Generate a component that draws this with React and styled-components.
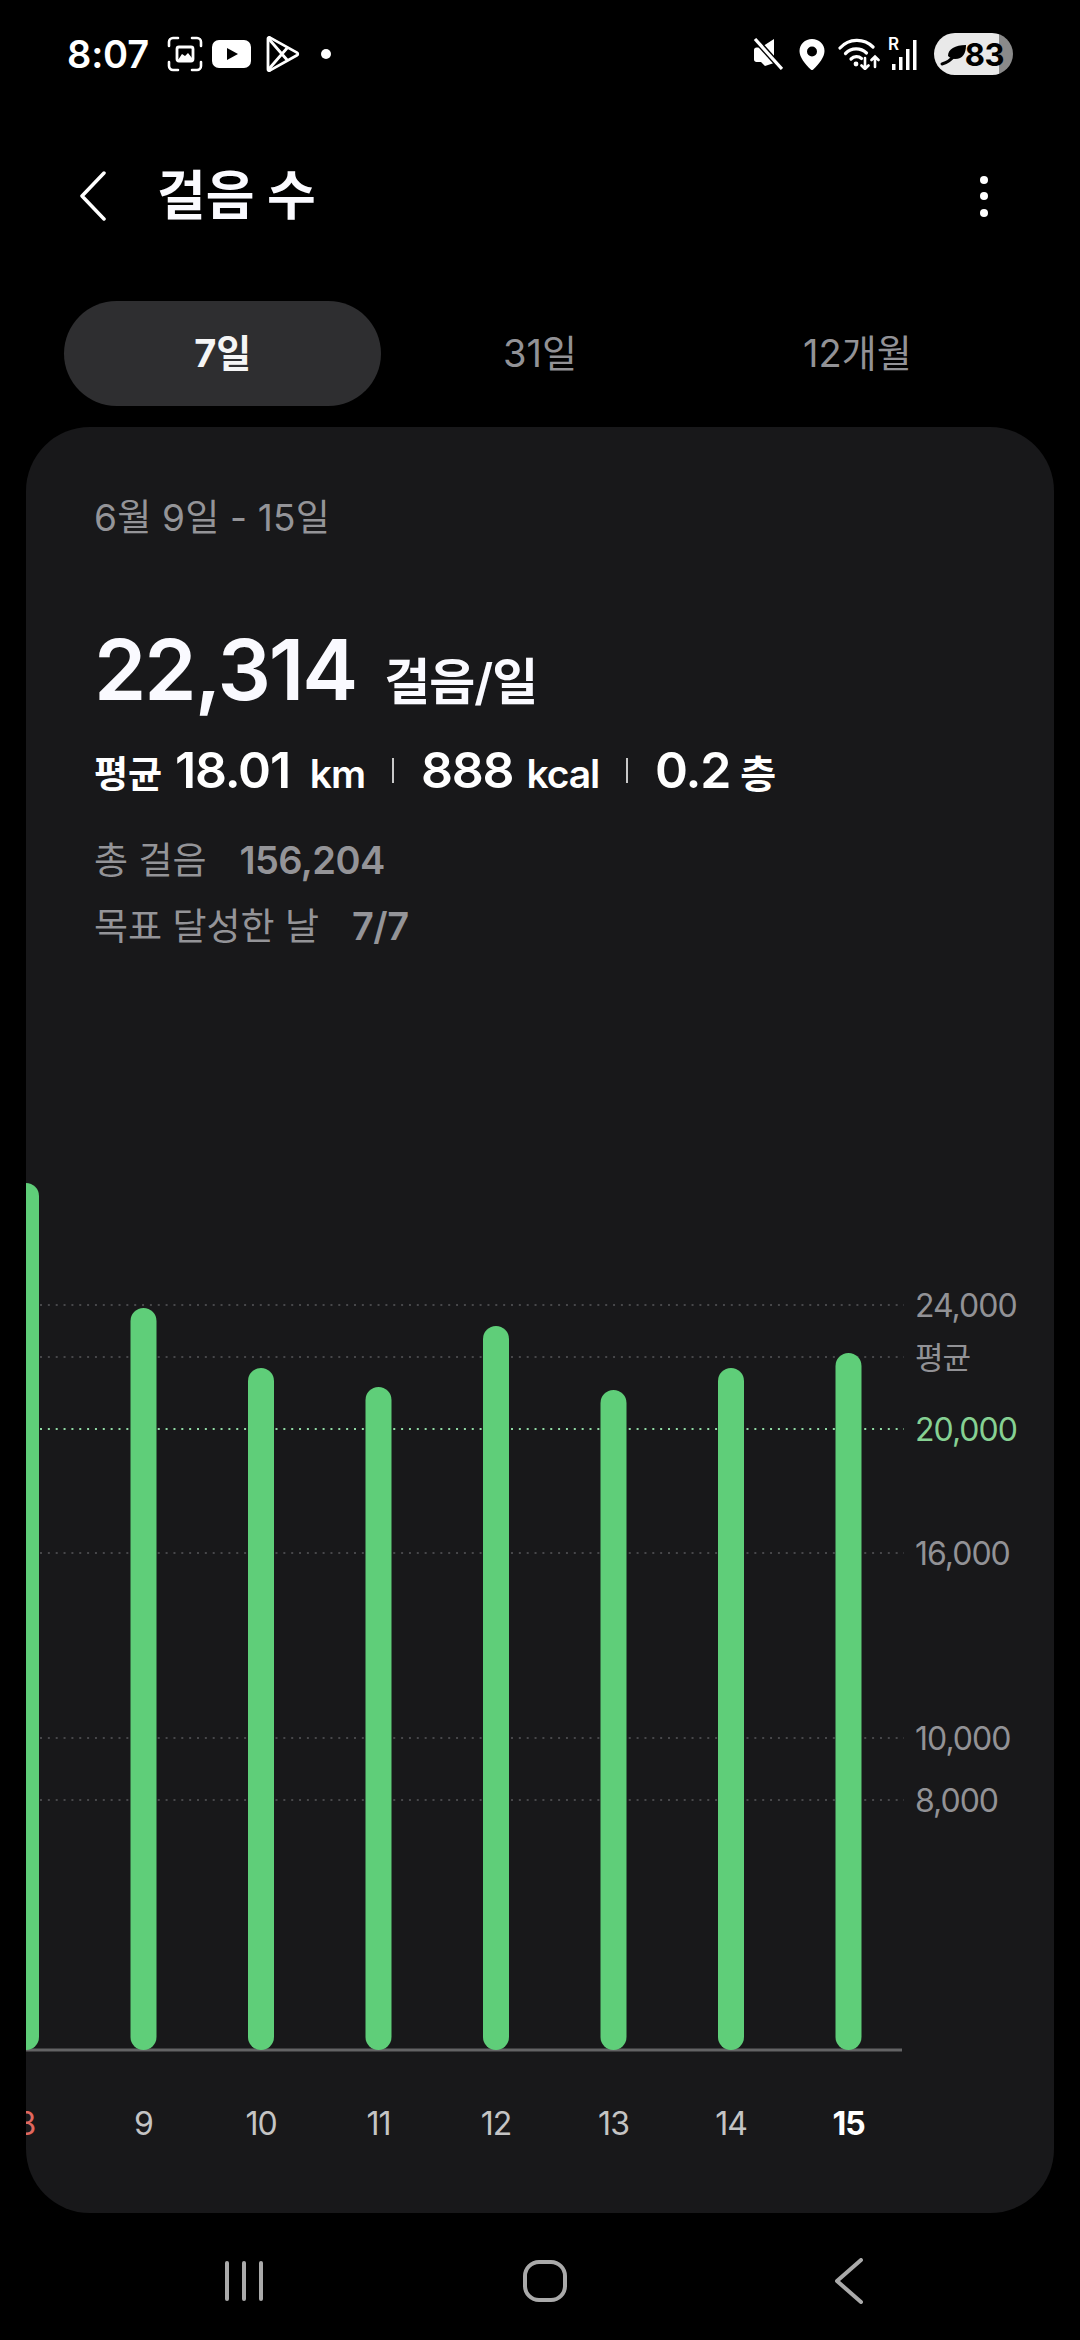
import React from 'react';
import styled, { createGlobalStyle } from 'styled-components';

const FONT = `Inter, "Noto Sans CJK KR", sans-serif`;

const GlobalStyle = createGlobalStyle`
  html, body {
    margin: 0;
    padding: 0;
    background: #000;
  }
  body {
    font-family: ${FONT};
  }
`;

const Screen = styled.div`
  width: 1080px;
  height: 2340px;
  background: #000;
  color: #fff;
  display: flex;
  flex-direction: column;
  overflow: hidden;
`;

const StatusBar = styled.div`
  height: 108px;
  flex: none;
  box-sizing: border-box;
  padding: 0 67px 0 67px;
  display: flex;
  align-items: center;
  justify-content: space-between;
`;

const StatusGroup = styled.div`
  display: flex;
  align-items: center;
`;

const Clock = styled.span`
  font-size: 38px;
  font-weight: 600;
  letter-spacing: -0.2px;
  width: 100px;
`;

const TitleBar = styled.div`
  height: 176px;
  flex: none;
  box-sizing: border-box;
  padding: 0 80px;
  display: flex;
  align-items: center;
`;

const Title = styled.h1`
  margin: 0 0 0 51px;
  font-size: 53px;
  font-weight: 700;
  line-height: 60px;
  color: #fafaff;
`;

const Kebab = styled.div`
  margin-left: auto;
  margin-right: 12px;
  display: flex;
  flex-direction: column;
  gap: 8.5px;
`;

const Dot = styled.span`
  width: ${p => p.$size || 8}px;
  height: ${p => p.$size || 8}px;
  margin-left: ${p => p.$offset || 0}px;
  border-radius: 50%;
  background: #fff;
`;

const Tabs = styled.div`
  margin: 17px 64px 0;
  height: 105px;
  flex: none;
  display: grid;
  grid-template-columns: repeat(3, 1fr);
`;

const Tab = styled.div`
  display: flex;
  align-items: center;
  justify-content: center;
  box-sizing: border-box;
  padding-bottom: 6px;
  border-radius: 53px;
  font-size: 38px;
  font-weight: ${p => (p.$active ? 700 : 400)};
  color: ${p => (p.$active ? '#f5f5f5' : '#929296')};
  background: ${p => (p.$active ? '#2e2e30' : 'transparent')};
`;

const Card = styled.section`
  margin: 21px 26px 0;
  height: 1786px;
  flex: none;
  background: #18181a;
  border-radius: 64px;
  overflow: hidden;
  display: flex;
  flex-direction: column;
`;

const Summary = styled.div`
  padding: 70px 0 0 68px;
`;

const DateRange = styled.div`
  font-size: 37px;
  line-height: 42px;
  letter-spacing: 0.2px;
  color: #949498;
`;

const AverageRow = styled.div`
  margin-top: 81px;
  height: 100px;
  display: flex;
  align-items: baseline;
  line-height: 100px;
`;

const BigNumber = styled.span`
  font-size: 84px;
  font-weight: 600;
  letter-spacing: -2px;
  color: #fafaff;
`;

const BigUnit = styled.span`
  margin-left: 28px;
  font-size: 50px;
  font-weight: 600;
  letter-spacing: -1px;
  color: #fafaff;
`;

const StatRow = styled.div`
  margin-top: 20px;
  height: 60px;
  display: flex;
  align-items: baseline;
  line-height: 60px;
`;

const StatLabel = styled.span`
  font-size: 37px;
  font-weight: 700;
  margin-right: 13px;
`;

const StatValue = styled.span`
  font-size: 50px;
  font-weight: 600;
  letter-spacing: -1.2px;
`;

const StatUnit = styled.span`
  font-size: 39px;
  font-weight: 600;
  margin-left: ${p => p.$gap}px;
  letter-spacing: -1.1px;
`;

const StatDivider = styled.span`
  width: 2px;
  height: 25px;
  margin: 0 27px;
  background: #c8c8c8;
  align-self: center;
`;

const InfoRow = styled.div`
  margin-top: ${p => p.$gap}px;
  height: 50px;
  display: flex;
  align-items: baseline;
  gap: 33px;
  line-height: 50px;
  font-size: 37px;
  color: #949498;
`;

const InfoValue = styled.span`
  font-size: 38px;
  font-weight: 600;
  letter-spacing: -0.6px;
`;

const ChartSvg = styled.svg`
  display: block;
  margin-top: auto;
  flex: none;
`;

const GridLine = styled.line`
  stroke: ${p => (p.$goal ? '#8fd9a3' : '#47474a')};
  stroke-width: 2;
  stroke-dasharray: 2 5.85;
`;

const BaseLine = styled.line`
  stroke: #636365;
  stroke-width: 3;
`;

const Bar = styled.rect`
  fill: #5fce79;
`;

const AxisLabel = styled.text`
  fill: ${p => (p.$goal ? '#86d193' : '#929296')};
  font-size: ${p => (p.$small ? 31 : 32)}px;
  font-family: ${FONT};
  letter-spacing: -1px;
  dominant-baseline: central;
`;

const DayLabel = styled.text`
  fill: ${p => p.$color};
  font-size: 32px;
  font-weight: ${p => (p.$today ? 700 : 400)};
  font-family: ${FONT};
  letter-spacing: -1px;
  text-anchor: middle;
  dominant-baseline: central;
`;

const NavBar = styled.nav`
  flex: 1;
  box-sizing: border-box;
  padding: 8px 0 0 223px;
  display: flex;
  align-items: center;
`;

const HomeSlot = styled.span`
  display: flex;
  margin: 0 268px 0 258px;
`;

const Battery = styled.div`
  position: relative;
  width: 79px;
  height: 42px;
  border-radius: 21px;
  background: linear-gradient(90deg, #e9e9e9 82%, #8a8a8a 82%);
  margin-left: 12px;
  color: #000;
  display: flex;
  align-items: center;
  justify-content: flex-end;
  padding-right: 9px;
  box-sizing: border-box;
  font-size: 31px;
  font-weight: 700;
  letter-spacing: -0.5px;
`;

const LeafIcon = styled.svg`
  position: absolute;
  left: 6px;
  top: 11px;
`;

const SignalWrap = styled.div`
  position: relative;
  width: 34px;
  height: 32px;
  margin-left: 6px;
  font-size: 17px;
  font-weight: 600;
  line-height: 17px;
`;

const RoamingMark = styled.span`
  position: absolute;
  left: 0;
  top: -2px;
`;

const SignalBars = styled.svg`
  position: absolute;
  left: 0;
  top: 0;
`;

const steps = [
  { day: '8', top: 1183, color: '#e0685f' },
  { day: '9', top: 1308 },
  { day: '10', top: 1368 },
  { day: '11', top: 1387 },
  { day: '12', top: 1326 },
  { day: '13', top: 1390 },
  { day: '14', top: 1368 },
  { day: '15', top: 1353, color: '#ffffff', today: true },
];

const axis = [
  { label: '24,000', y: 1305 },
  { label: '평균', y: 1357, small: true },
  { label: '20,000', y: 1429, goal: true },
  { label: '16,000', y: 1553 },
  { label: '10,000', y: 1738 },
  { label: '8,000', y: 1800 },
];

const CHART_TOP = 1150;
const STEP_X = 117.5;
const BAR_W = 26;
const BASE_Y = 2050 - CHART_TOP;

function Chart() {
  return (
    <ChartSvg width="1028" height="1063" viewBox="0 0 1028 1063">
      {axis.map(a => (
        <g key={a.label}>
          <GridLine x1="14" x2="878" y1={a.y - CHART_TOP} y2={a.y - CHART_TOP} $goal={a.goal} />
          <AxisLabel x="889" y={a.y - CHART_TOP} $goal={a.goal} $small={a.small}>{a.label}</AxisLabel>
        </g>
      ))}
      <BaseLine x1="0" x2="876" y1={BASE_Y} y2={BASE_Y} />
      {steps.map((s, i) => (
        <g key={s.day}>
          <Bar
            x={i * STEP_X - BAR_W / 2}
            y={s.top - CHART_TOP}
            width={BAR_W}
            height={2050 - s.top}
            rx={BAR_W / 2}
          />
          <DayLabel x={i * STEP_X} y={2123 - CHART_TOP} $color={s.color || '#c4c4c4'} $today={s.today}>
            {s.day}
          </DayLabel>
        </g>
      ))}
    </ChartSvg>
  );
}

const CaptureIcon = () => (
  <svg width="36" height="36" viewBox="0 0 36 36" fill="none" stroke="#fff" strokeWidth="2.6" strokeLinecap="round">
    <path d="M2 10V6a4 4 0 0 1 4-4h5M25 2h5a4 4 0 0 1 4 4v4M34 26v4a4 4 0 0 1-4 4h-5M11 34H6a4 4 0 0 1-4-4v-4" />
    <rect x="10" y="11" width="16" height="14" rx="2" strokeWidth="2.8" />
    <path d="M11 24l4-6 3 2 3-3 4 5v2z" fill="#fff" stroke="none" />
  </svg>
);

const YoutubeIcon = () => (
  <svg width="40" height="28" viewBox="0 0 40 28" style={{ marginLeft: 9 }}>
    <rect width="39" height="28" rx="7" fill="#fff" />
    <path d="M15 8l11 6-11 6z" fill="#000" />
  </svg>
);

const PlayIcon = () => (
  <svg width="35" height="36" viewBox="0 0 35 36" fill="none" stroke="#fff" strokeWidth="2.8" strokeLinejoin="round" style={{ marginLeft: 13 }}>
    <path d="M3 2.5c0-1 1-1.4 2-.9l27 15c1 .6 1 2 0 2.6l-27 15.2c-1 .5-2 0-2-1z" />
    <path d="M3 2l20 23M3 34l20-23" />
  </svg>
);

const MuteIcon = () => (
  <svg width="30" height="32" viewBox="0 0 30 32">
    <path d="M1 12c0-1.500 1-2.500 2.500-2.500H8L21 1v24L12 28 8 24H3.500C2 24 1 23 1 21.500z" fill="#fff" />
    <path d="M2 1l27 30" stroke="#000" strokeWidth="6" />
    <path d="M2 1l27 30" stroke="#fff" strokeWidth="3.200" />
  </svg>
);

const PinIcon = () => (
  <svg width="26" height="31" viewBox="0 0 26 31" style={{ marginLeft: 16 }}>
    <path
      fillRule="evenodd"
      fill="#fff"
      d="M13 0c7 0 12.500 5.200 12.500 12 0 6-5.500 13-11 18.200a2 2 0 0 1-3 0C6 25 .5 18 .5 12 .5 5.200 6 0 13 0zm0 7.500a5 5 0 1 0 0 10 5 5 0 0 0 0-10z"
    />
  </svg>
);

const WifiIcon = () => (
  <svg width="44" height="32" viewBox="0 0 44 32" fill="none" stroke="#fff" strokeWidth="3.200" strokeLinecap="round" style={{ marginLeft: 13 }}>
    <path d="M2 10C11 0 26 0 35 9" />
    <path d="M7.500 15.500c6-6 15-6 21-.5" />
    <path d="M13 21c3-3 7.500-3 10.500-.5" />
    <circle cx="18" cy="26" r="2.400" fill="#fff" stroke="none" />
    <path d="M27 20v11M23.500 27.500L27 31l3.500-3.500M37 29V19M33.500 22L37 18.500l3.500 3.500" strokeWidth="2.600" />
  </svg>
);

const LeafGlyph = () => (
  <LeafIcon width="27" height="22" viewBox="0 0 27 22">
    <path d="M8 12C8 5 15 1 26 1c0 8-3 14-11 14-3 0-5-1-7-3z" fill="#000" />
    <path d="M2 20c4-1 9-4 13-9" stroke="#000" strokeWidth="3" fill="none" strokeLinecap="round" />
  </LeafIcon>
);

const ChevronLeft = ({ w, h, color, sw }) => (
  <svg width={w} height={h} viewBox={`0 0 ${w} ${h}`} fill="none" stroke={color} strokeWidth={sw} strokeLinecap="round" strokeLinejoin="round">
    <path d={`M${w - 2} 2L2 ${h / 2}L${w - 2} ${h - 2}`} />
  </svg>
);

const RecentsIcon = () => (
  <svg width="42" height="40" viewBox="0 0 42 40" fill="#aaa">
    <rect x="2" y="0" width="4" height="40" rx="2" />
    <rect x="19" y="0" width="4" height="40" rx="2" />
    <rect x="36" y="0" width="4" height="40" rx="2" />
  </svg>
);

const HomeIcon = () => (
  <svg width="44" height="42" viewBox="0 0 44 42" fill="none" stroke="#aaa" strokeWidth="4">
    <rect x="2" y="2" width="40" height="38" rx="14" />
  </svg>
);

export default function App() {
  return (
    <Screen>
      <GlobalStyle />
      <StatusBar>
        <StatusGroup>
          <Clock>8:07</Clock>
          <CaptureIcon />
          <YoutubeIcon />
          <PlayIcon />
          <Dot $size={10} $offset={21} />
        </StatusGroup>
        <StatusGroup>
          <MuteIcon />
          <PinIcon />
          <WifiIcon />
          <SignalWrap>
            <RoamingMark>R</RoamingMark>
            <SignalBars width="34" height="32" viewBox="0 0 34 32" fill="#fff">
              <rect x="4" y="26" width="3.500" height="6" />
              <rect x="11" y="19" width="3.500" height="13" />
              <rect x="18" y="11" width="3.500" height="21" />
              <rect x="25" y="2" width="3.500" height="30" />
            </SignalBars>
          </SignalWrap>
          <Battery>
            <LeafGlyph />
            83
          </Battery>
        </StatusGroup>
      </StatusBar>

      <TitleBar>
        <ChevronLeft w={26} h={50} color="#fff" sw={3.5} />
        <Title>걸음 수</Title>
        <Kebab>
          <Dot />
          <Dot />
          <Dot />
        </Kebab>
      </TitleBar>

      <Tabs>
        <Tab $active>7일</Tab>
        <Tab>31일</Tab>
        <Tab>12개월</Tab>
      </Tabs>

      <Card>
        <Summary>
          <DateRange>6월 9일 - 15일</DateRange>
          <AverageRow>
            <BigNumber>22,314</BigNumber>
            <BigUnit>걸음/일</BigUnit>
          </AverageRow>
          <StatRow>
            <StatLabel>평균</StatLabel>
            <StatValue>18.01</StatValue>
            <StatUnit $gap={20}>km</StatUnit>
            <StatDivider />
            <StatValue>888</StatValue>
            <StatUnit $gap={13}>kcal</StatUnit>
            <StatDivider />
            <StatValue>0.2</StatValue>
            <StatUnit $gap={10}>층</StatUnit>
          </StatRow>
          <InfoRow $gap={35}>
            <span>총 걸음</span>
            <InfoValue>156,204</InfoValue>
          </InfoRow>
          <InfoRow $gap={16}>
            <span>목표 달성한 날</span>
            <InfoValue>7/7</InfoValue>
          </InfoRow>
        </Summary>
        <Chart />
      </Card>

      <NavBar>
        <RecentsIcon />
        <HomeSlot>
          <HomeIcon />
        </HomeSlot>
        <ChevronLeft w={28} h={46} color="#aaa" sw={4} />
      </NavBar>
    </Screen>
  );
}
